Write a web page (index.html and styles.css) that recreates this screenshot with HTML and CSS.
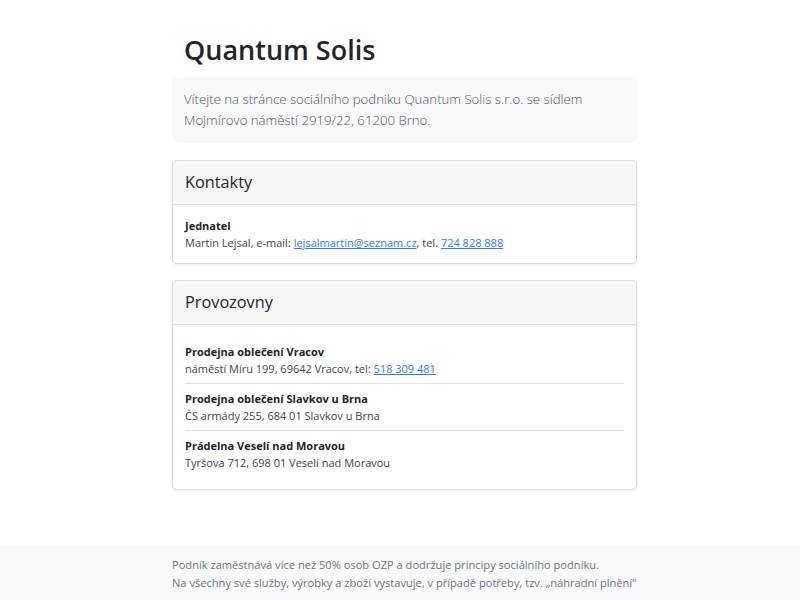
FILE: index.html
```html
<!DOCTYPE html>
<html lang="cs">
<head>
<meta charset="utf-8">
<title>Quantum Solis</title>
<link rel="stylesheet" href="styles.css">
</head>
<body>
<main class="page">
  <div class="container">
    <h1 class="title">Quantum Solis</h1>
    <div class="lead-box">
      <p class="lead">Vítejte na stránce sociálního podniku Quantum Solis s.r.o. se sídlem Mojmírovo náměstí 2919/22, 61200 Brno.</p>
    </div>
    <section class="card">
      <div class="card-header">Kontakty</div>
      <div class="card-body">
        <div class="item-title">Jednatel</div>
        <div class="item-text">Martin Lejsal, e-mail: <a href="#">lejsalmartin@seznam.cz</a>, tel. <a href="#">724 828 888</a></div>
      </div>
    </section>
    <section class="card">
      <div class="card-header">Provozovny</div>
      <div class="card-body">
        <ul class="list">
          <li class="list-item">
            <div class="item-title">Prodejna oblečení Vracov</div>
            <div class="item-text">náměstí Míru 199, 69642 Vracov, tel: <a href="#">518 309 481</a></div>
          </li>
          <li class="list-item">
            <div class="item-title">Prodejna oblečení Slavkov u Brna</div>
            <div class="item-text">ČS armády 255, 684 01 Slavkov u Brna</div>
          </li>
          <li class="list-item">
            <div class="item-title">Prádelna Veselí nad Moravou</div>
            <div class="item-text">Tyršova 712, 698 01 Veselí nad Moravou</div>
          </li>
        </ul>
      </div>
    </section>
  </div>
</main>
<footer class="footer">
  <div class="container">
    <p class="footer-text">Podnik zaměstnává více než 50% osob OZP a dodržuje principy sociálního podniku.<br>Na všechny své služby, výrobky a zboží vystavuje, v případě potřeby, tzv. „náhradní plnění“</p>
  </div>
</footer>
</body>
</html>
```

FILE: styles.css
```css
* { box-sizing: border-box; }
html, body { margin: 0; padding: 0; }
body {
  font-family: "Open Sans", "Noto Sans", sans-serif;
  color: #212529;
  background: #fff;
  font-size: 11px;
  line-height: 17px;
}
.container {
  width: 465px;
  margin-left: 172px;
}
.page {
  padding-top: 26px;
  padding-bottom: 55px;
}
.title {
  margin: 0;
  padding: 0 12px;
  font-size: 27px;
  line-height: 48px;
  font-weight: 600;
  color: #212529;
}
.lead-box {
  margin-top: 3px;
  background: #f8f9fa;
  border-radius: 6px;
  padding: 12px 12px;
}
.lead {
  margin: 0;
  font-size: 13.2px;
  line-height: 21px;
  font-weight: 300;
  color: #50565c;
}
.card {
  margin-top: 17px;
  border: 1px solid #dcdcdc;
  border-radius: 5px;
  box-shadow: 0 1px 3px rgba(0,0,0,0.08);
  background: #fff;
  overflow: hidden;
}
.card + .card { margin-top: 16px; }
.card-header {
  height: 44px;
  display: flex;
  align-items: center;
  padding: 0 12px;
  background: #f7f7f7;
  border-bottom: 1px solid #dcdcdc;
  font-size: 16.3px;
  color: #212529;
}
.card-body { padding: 12px 12px; }
.item-title { font-weight: 700; color: #212529; }
.item-text { color: #3f4448; }
.item-text a { color: #2f7bf0; }
.list { list-style: none; margin: 0; padding: 0; }
.list-item {
  padding: 6px 0;
  border-bottom: 1px solid #dee2e6;
}
.list-item:last-child { border-bottom: 0; }
.footer {
  background: #f8fafc;
  height: 57px;
  padding-top: 11px;
}
.footer-text {
  margin: 0;
  font-size: 11.1px;
  line-height: 18px;
  color: #6c757d;
  white-space: nowrap;
}
```
